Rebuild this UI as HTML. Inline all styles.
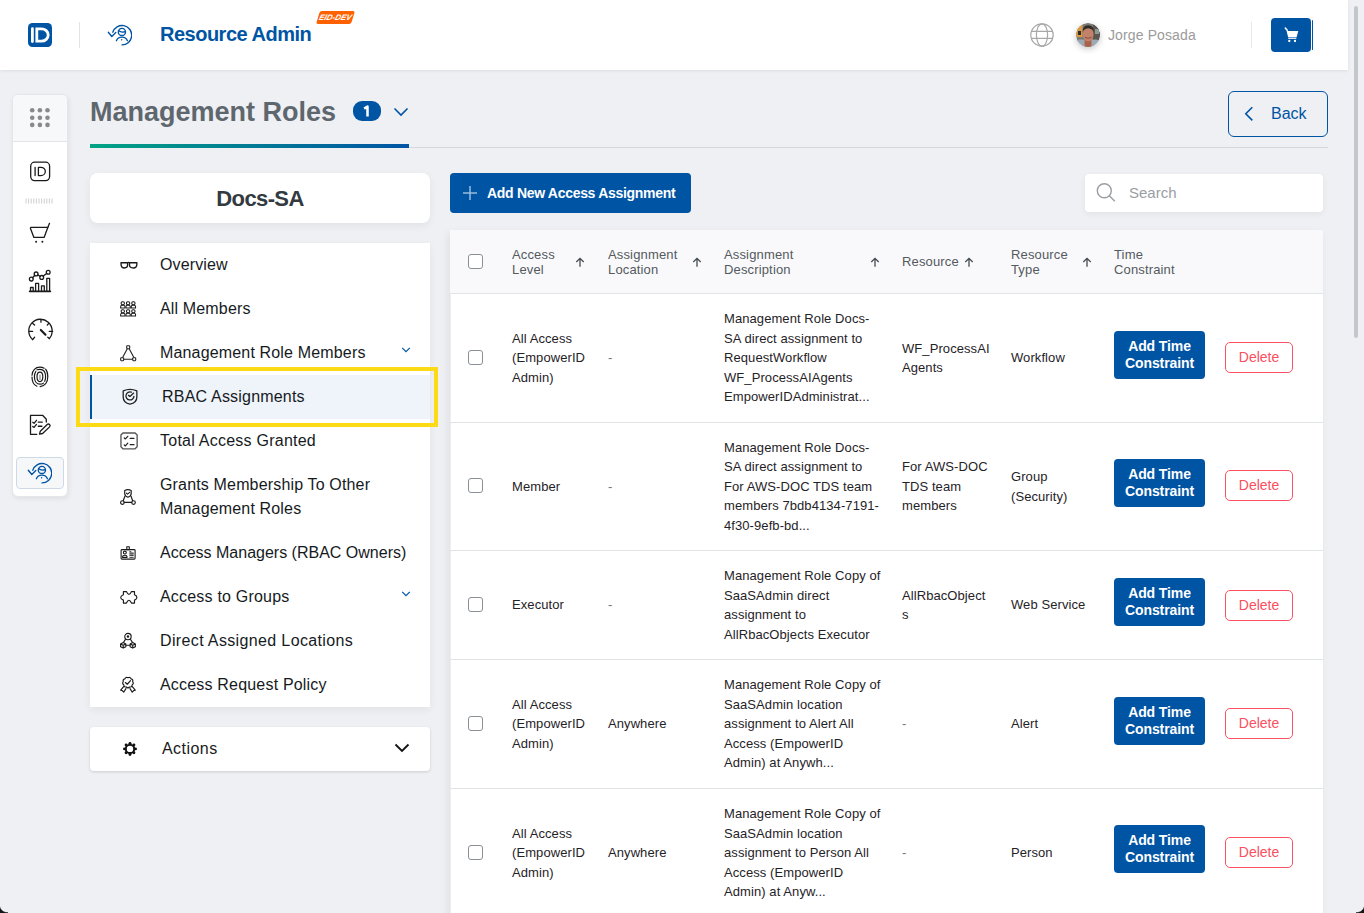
<!DOCTYPE html>
<html><head><meta charset="utf-8">
<style>
*{box-sizing:border-box;margin:0;padding:0}
html,body{width:1364px;height:913px;overflow:hidden}
body{background:#eef0f4;font-family:"Liberation Sans",sans-serif;color:#222;position:relative}
.abs{position:absolute}
#hdr{left:0;top:0;width:1348px;height:70px;background:#fff;box-shadow:0 1px 3px rgba(0,0,0,.08)}
#sb{left:1354px;top:6px;width:4px;height:332px;border-radius:2px;background:#c3c7cb}
.logo{left:28px;top:23px;width:24px;height:24px;background:#0054a4;border-radius:5px}
.vdiv{width:1px;background:#e3e3e3}
.ratitle{left:160px;top:23px;font-size:20px;font-weight:bold;color:#0054a4;letter-spacing:-0.5px}
.eid{left:318px;top:11px;width:35px;height:13px;background:#ff6100;transform:skewX(-17deg);border-radius:2px;color:#fff;font-size:8px;font-style:italic;font-weight:bold;text-align:center;line-height:13px}
.user{left:1108px;top:27px;font-size:14px;color:#9b9b9b;letter-spacing:0.12px}
.cart{left:1271px;top:18px;width:40px;height:34px;background:#0054a4;border-radius:4px}
/* left rail */
#rail{left:12px;top:94px;width:56px;height:403px;background:#fff;border:1px solid #e4e6ea;border-radius:6px;box-shadow:1px 2px 5px rgba(0,0,0,.07);overflow:hidden}
#rail .top{height:47px;background:#f7f8fa;border-bottom:1px solid #e2e4e8}
/* title */
.title{left:90px;top:97px;font-size:27px;font-weight:bold;color:#5f676e}
.badge{left:353px;top:101px;width:28px;height:20px;border-radius:9px;background:#0054a4;color:#fff;font-weight:bold;font-size:13px;text-align:center;line-height:20px}
.gline{left:90px;top:147px;width:1238px;height:1px;background:#d5d8dc}
.gbar{left:90px;top:144px;width:319px;height:4px;background:linear-gradient(90deg,#03a384,#0054a4)}
.backt{left:1271px;top:105px;font-size:16px;color:#0054a4}
.back{left:1228px;top:91px;width:100px;height:46px;border:1.5px solid #0054a4;border-radius:6px;color:#0054a4;font-size:16px}
/* left menu */
.docs{left:90px;top:173px;width:340px;height:50px;background:#fff;border-radius:8px;box-shadow:0 3px 8px rgba(0,0,0,.06);font-size:22px;font-weight:bold;color:#333a40;text-align:center;line-height:52px;letter-spacing:-0.6px}
#menu{left:90px;top:243px;width:340px;height:464px;background:#fff;box-shadow:0 3px 8px rgba(0,0,0,.06)}
.mi{position:absolute;left:0;width:340px;font-size:16px;color:#161a1d;line-height:24px;margin-top:1px}
.mi .t{position:absolute;left:70px}
.mi svg{position:absolute}
.actt{left:162px;top:740px;font-size:16px;color:#1a1a1a;letter-spacing:0.45px}
.actions{left:90px;top:727px;width:340px;height:44px;background:#fff;border-radius:4px;box-shadow:0 1px 3px rgba(0,0,0,.15)}
/* main */
.addt{left:487px;top:185px;font-size:14px;font-weight:bold;color:#fff;letter-spacing:-0.3px}
.addbtn{left:450px;top:173px;width:241px;height:40px;background:#0054a4;border-radius:4px;color:#fff;font-size:15px;font-weight:bold}
.srt{left:1129px;top:184px;font-size:15px;color:#9a9ea3}
.search{left:1085px;top:174px;width:238px;height:38px;background:#fff;border-radius:4px;box-shadow:0 2px 6px rgba(0,0,0,.06)}
#tbl{left:450px;top:230px;width:873px;height:700px;background:#fff;box-shadow:inset 1px 0 0 #eceef1,-2px 3px 8px rgba(0,0,0,.07)}
.thead{position:absolute;left:0;top:0;width:873px;height:64px;background:#f9f9fb;border-bottom:1px solid #e2e3e6}
.hc{position:absolute;display:flex;align-items:center;font-size:13px;line-height:15px;color:#545a60;letter-spacing:0.15px}
.row{position:absolute;left:0;width:873px;border-bottom:1px solid #e2e3e6}
.c{position:absolute;top:0;bottom:0;display:flex;align-items:center;font-size:13px;line-height:19.5px;color:#1f2327;letter-spacing:0.08px}
.cb{position:absolute;width:15px;height:15px;border:1px solid #8a8f95;border-radius:3px;background:#fff}
.atc{position:absolute;left:664px;width:91px;height:48px;background:#0054a4;border-radius:4px;color:#fff;font-size:14px;font-weight:bold;text-align:center;line-height:17px;padding-top:7px;letter-spacing:-0.1px}
.dash{color:#777}
.del{position:absolute;left:775px;width:68px;height:31px;border:1px solid #fb5263;border-radius:5px;color:#f9505f;font-size:14px;text-align:center;line-height:29px}
</style></head>
<body>
<div id="hdr" class="abs"></div>
<div id="sb" class="abs"></div>
<!-- header -->
<svg class="abs" style="left:28px;top:23px" width="24" height="24" viewBox="0 0 24 24"><rect width="24" height="24" rx="4.5" fill="#0054a4"/><rect x="3" y="4.2" width="2.8" height="15.8" rx="1.4" fill="#fff"/><path d="M8.8 5.8H13.5A6.7 6.2 0 0 1 13.5 18.2H8.8Z" fill="none" stroke="#fff" stroke-width="2.8"/></svg>
<div class="abs vdiv" style="left:79px;top:22px;height:26px"></div>
<svg class="abs" style="left:106px;top:22px" width="26" height="26" viewBox="0 0 26 26"><g fill="none" stroke="#0054a4" stroke-width="1.35" stroke-linecap="round" stroke-linejoin="round"><path d="M16 22.9A9.7 9.7 0 1 0 6.77 10.2"/><path d="M2.3 10.3L5.8 14.5L9.8 10.5"/><circle cx="15.9" cy="9.9" r="3.6"/><path d="M12.5 8.6Q15.3 11 19.3 9.6"/><path d="M10.4 18.7C11.5 15.8 13.5 15.1 15.9 15.1C18.3 15.1 20.3 15.8 21.4 18.7"/></g><circle cx="15.6" cy="17.8" r=".75" fill="#0054a4"/></svg>
<div class="abs ratitle">Resource Admin</div>
<div class="abs eid">EID-DEV</div>
<svg class="abs" style="left:1030px;top:23px" width="24" height="24" viewBox="0 0 24 24"><g fill="none" stroke="#a8a8a8" stroke-width="1.2"><circle cx="12" cy="12" r="11.2"/><ellipse cx="12" cy="12" rx="5.6" ry="11.2"/><path d="M1.2 8.3h21.6M1.2 15.4h21.6"/></g></svg>
<svg class="abs" style="left:1076px;top:23px;border-radius:50%;box-shadow:0 2px 6px rgba(0,0,0,.22)" width="24" height="24" viewBox="0 0 24 24"><defs><clipPath id="av"><circle cx="12" cy="12" r="12"/></clipPath></defs><g clip-path="url(#av)"><rect width="24" height="24" fill="#7d7a76"/><rect x="0" y="2" width="6.5" height="12" fill="#d99a48"/><rect x="2" y="8" width="3" height="4" fill="#2a2a2a"/><rect x="17" y="0" width="7" height="17" fill="#5b5750"/><rect x="19" y="6" width="4" height="5" fill="#8e9a90"/><path d="M0 24V17.5Q5 15.5 12 18Q19 15.5 24 17.5V24Z" fill="#9fa9b5"/><path d="M8.5 16H15.5V24H8.5Z" fill="#a8644a"/><ellipse cx="12.2" cy="11.5" rx="5.3" ry="7" fill="#c4816a"/><path d="M6.6 9.5Q6.3 2.2 12.2 2.2Q18 2.2 17.8 9.5Q17 5.6 12.2 5.3Q7.5 5.6 6.6 9.5Z" fill="#2e2a26"/><path d="M9 14.2Q12.2 16.6 15.4 14.2" stroke="#7a4a3a" stroke-width=".9" fill="none"/></g></svg>
<div class="abs user">Jorge Posada</div>
<div class="abs vdiv" style="left:1251px;top:22px;height:26px;background:#e8e8e8"></div>
<div class="abs cart"></div>
<svg class="abs" style="left:1284px;top:27px" width="16" height="16" viewBox="0 0 16 16"><path d="M1.3 1L3.2 3.3" stroke="#fff" stroke-width="1.5" stroke-linecap="round"/><path d="M2.6 4H14.3L12.6 10.3H4.1Z" fill="#fff"/><path d="M4.2 11.3H12.3" stroke="#fff" stroke-width="1.1"/><g fill="#fff"><circle cx="5.3" cy="14" r="1.15"/><circle cx="11" cy="14" r="1.15"/></g></svg>
<div class="abs" style="left:1312px;top:20px;width:1px;height:30px;background:#0054a4;border-radius:1px"></div>

<!-- rail -->
<div id="rail" class="abs"><div class="top"></div></div>
<svg class="abs" style="left:29px;top:106px" width="22" height="22" viewBox="0 0 22 22"><g fill="#8a8a8a"><circle cx="3.2" cy="4.2" r="2.3"/><circle cx="3.2" cy="11.7" r="2.3"/><circle cx="3.2" cy="18.9" r="2.3"/><circle cx="10.9" cy="4.2" r="2.3"/><circle cx="10.9" cy="11.7" r="2.3"/><circle cx="10.9" cy="18.9" r="2.3"/><circle cx="18.5" cy="4.2" r="2.3"/><circle cx="18.5" cy="11.7" r="2.3"/><circle cx="18.5" cy="18.9" r="2.3"/></g></svg>
<svg class="abs" style="left:24px;top:152px" width="34" height="34" viewBox="0 0 34 34"><g fill="none" stroke="#1a1a1a" stroke-width="1.3" stroke-linecap="round" stroke-linejoin="round" stroke-width="1.4"><rect x="6.7" y="10.2" width="18.9" height="18.4" rx="4"/><path d="M11.1 15.3V23.6M14.4 15.3H16.9A4.4 4.15 0 0 1 16.9 23.6H14.4Z"/></g></svg>
<svg class="abs" style="left:25px;top:198px" width="30" height="6" viewBox="0 0 30 6"><g stroke="#c8c8c8" stroke-width="0.9"><path d="M1.0 0.5V5.5"/><path d="M3.6 0.5V5.5"/><path d="M6.2 0.5V5.5"/><path d="M8.8 0.5V5.5"/><path d="M11.4 0.5V5.5"/><path d="M14.0 0.5V5.5"/><path d="M16.6 0.5V5.5"/><path d="M19.2 0.5V5.5"/><path d="M21.8 0.5V5.5"/><path d="M24.400000000000002 0.5V5.5"/><path d="M27.0 0.5V5.5"/></g></svg>
<svg class="abs" style="left:24px;top:216px" width="34" height="34" viewBox="0 0 34 34"><g fill="none" stroke="#1a1a1a" stroke-width="1.3" stroke-linecap="round" stroke-linejoin="round"><path d="M6.8 11.4H23.8L20.1 21.4H9.9L6.4 12.2Z"/><path d="M23.8 11.4L25.5 7.3"/></g><g fill="#1a1a1a"><circle cx="12.1" cy="25.7" r="1"/><circle cx="18.4" cy="25.7" r="1"/></g></svg>
<svg class="abs" style="left:24px;top:264px" width="34" height="34" viewBox="0 0 34 34"><g fill="none" stroke="#1a1a1a" stroke-width="1.3" stroke-linecap="round" stroke-linejoin="round"><path d="M5.6 27.4H26.4" stroke-width="1.6"/><path d="M6.5 27.4V23.5H9.2V27.4M11.6 27.4V19.4H14.6V27.4M17.5 27.4V21.8H20.3V27.4M22.8 27.4V14.3H25.6V27.4"/><circle cx="7.3" cy="15.1" r="1.9"/><circle cx="12.1" cy="9.9" r="1.9"/><circle cx="17.7" cy="13.4" r="1.9"/><circle cx="24.2" cy="8.2" r="1.9"/><path d="M8.6 13.7L10.8 11.3M13.8 10.9L16 12.3M19.3 12.1L22.6 9.4"/></g></svg>
<svg class="abs" style="left:24px;top:312px" width="34" height="34" viewBox="0 0 34 34"><g fill="none" stroke="#1a1a1a" stroke-width="1.3" stroke-linecap="round" stroke-linejoin="round"><path d="M8.6 27.6A11.7 11.7 0 1 1 25.3 26.6"/><path d="M8.6 27.6L10.6 25.3M25.3 26.6L23.8 25.3M16.95 7.6V10.2M5.4 19.4H8.6M28.6 19.4H25.3M8.75 11.4L10.6 13M24.8 11.4L23.3 13"/><path d="M16.8 17.9L21.5 22.7" stroke-width="2.1"/></g></svg>
<svg class="abs" style="left:24px;top:360px" width="34" height="34" viewBox="0 0 34 34"><g fill="none" stroke="#1a1a1a" stroke-width="1.2" stroke-linecap="round"><path d="M8 15.2C8.3 10.5 11.4 7.1 15.9 7.1C17.6 7.1 19 7.6 20.1 8.3"/><path d="M21.6 9.2C23 10.8 23.8 13.2 23.8 16.8C23.8 22.3 20.6 26 16.2 26.6"/><path d="M12.9 26.2C10 25 8 21.5 8 17"/><path d="M13 9.8C14 9.4 15 9.3 16 9.3C19.3 9.3 21.6 12.1 21.6 16.7C21.6 18.5 21.3 20 20.7 21.3"/><path d="M19.5 23.1C18.6 23.8 17.4 24.2 16 24.2C12.7 24.2 10.4 21.2 10.4 16.7C10.4 14.6 10.9 12.9 11.8 11.5"/><ellipse cx="15.9" cy="16.85" rx="2.9" ry="4.75"/><path d="M16 15V19.6" stroke="#888"/></g></svg>
<svg class="abs" style="left:24px;top:408px" width="34" height="34" viewBox="0 0 34 34"><g fill="none" stroke="#1a1a1a" stroke-width="1.3" stroke-linecap="round" stroke-linejoin="round"><path d="M12.8 26.3H6.5V7.45H18.8L22.3 11.2V14.1"/><path d="M8.75 14.3L10.05 15.3L12.5 12.3M8.75 18.4L10.05 19.4L12.5 16.4M14.3 14.15H18.2M14.3 18.25H17.9"/><path d="M15.5 26.2L16.3 23.2L23.2 16.5A1.7 1.7 0 0 1 25.6 18.9L18.6 25.5Z"/></g></svg>
<div class="abs" style="left:16px;top:457px;width:48px;height:32px;border:1px solid #cfd9e6;border-radius:4px;background:#f6f7f9"></div>
<svg class="abs" style="left:26px;top:460px" width="26" height="26" viewBox="0 0 26 26"><g fill="none" stroke="#0054a4" stroke-width="1.35" stroke-linecap="round" stroke-linejoin="round"><path d="M16 22.9A9.7 9.7 0 1 0 6.77 10.2"/><path d="M2.3 10.3L5.8 14.5L9.8 10.5"/><circle cx="15.9" cy="9.9" r="3.6"/><path d="M12.5 8.6Q15.3 11 19.3 9.6"/><path d="M10.4 18.7C11.5 15.8 13.5 15.1 15.9 15.1C18.3 15.1 20.3 15.8 21.4 18.7"/></g><circle cx="15.6" cy="17.8" r=".75" fill="#0054a4"/></svg>

<!-- title -->
<div class="abs title">Management Roles</div>
<div class="abs badge"></div>
<svg class="abs" style="left:360px;top:104px" width="12" height="14" viewBox="0 0 12 14"><path d="M4.2 4.6L7.5 2.5V12.5" fill="none" stroke="#fff" stroke-width="2.5" stroke-linecap="butt" stroke-linejoin="round"/></svg>
<svg class="abs" style="left:393px;top:107px" width="16" height="10" viewBox="0 0 16 10"><path d="M1.5 1.5L8 8L14.5 1.5" fill="none" stroke="#0054a4" stroke-width="1.6"/></svg>
<div class="abs gline"></div>
<div class="abs gbar"></div>
<div class="abs back"></div>
<svg class="abs" style="left:1244px;top:106px" width="10" height="16" viewBox="0 0 10 16"><path d="M8.3 1.2L1.8 7.8L8.3 14.4" fill="none" stroke="#0054a4" stroke-width="1.6"/></svg>
<div class="abs backt">Back</div>

<div class="abs docs">Docs-SA</div>
<div id="menu" class="abs">
<div class="abs" style="left:0;top:132px;width:340px;height:44px;background:#eff3fa;border-left:2.5px solid #0054a4"></div>
<div class="mi" style="top:9px"><span class="t" style="left:70px;letter-spacing:0.13px">Overview</span></div>
<div class="mi" style="top:53px"><span class="t" style="left:70px;letter-spacing:0.15px">All Members</span></div>
<div class="mi" style="top:97px"><span class="t" style="left:70px;letter-spacing:0.16px">Management Role Members</span></div>
<div class="mi" style="top:141px"><span class="t" style="left:72px;letter-spacing:0.2px">RBAC Assignments</span></div>
<div class="mi" style="top:185px"><span class="t" style="left:70px;letter-spacing:0.24px">Total Access Granted</span></div>
<div class="mi" style="top:229px"><span class="t" style="left:70px;letter-spacing:0.16px">Grants Membership To Other<br>Management Roles</span></div>
<div class="mi" style="top:297px"><span class="t" style="left:70px;letter-spacing:0px">Access Managers (RBAC Owners)</span></div>
<div class="mi" style="top:341px"><span class="t" style="left:70px;letter-spacing:0.2px">Access to Groups</span></div>
<div class="mi" style="top:385px"><span class="t" style="left:70px;letter-spacing:0.36px">Direct Assigned Locations</span></div>
<div class="mi" style="top:429px"><span class="t" style="left:70px;letter-spacing:0.19px">Access Request Policy</span></div>
<svg class="abs" style="left:29px;top:17px" width="20" height="10" viewBox="0 0 20 10"><g fill="none" stroke="#1a1a1a" stroke-width="1.35" stroke-linejoin="round"><path d="M2 2.7H8.6V5.3Q8.4 8 5.4 8Q2.4 8 2.1 5Z"/><path d="M10.5 2.7H17.9L17.8 5Q17.5 8 14.4 8Q10.7 8 10.5 5.3Z"/><path d="M8.6 2.7Q9.5 2 10.5 2.7"/></g></svg><svg class="abs" style="left:30px;top:57px" width="17" height="18" viewBox="0 0 17 18"><g fill="none" stroke="#1a1a1a" stroke-width="1.05" stroke-linejoin="round"><g transform="translate(0.1,1.1)"><rect x="1.1" y="0.6" width="3.2" height="3.1" rx="1.2"/><path d="M0.55 6.8V5.4Q0.55 4.1 2 4.1H3.4Q4.85 4.1 4.85 5.4V6.8Z"/></g><g transform="translate(5.4,1.1)"><rect x="1.1" y="0.6" width="3.2" height="3.1" rx="1.2"/><path d="M0.55 6.8V5.4Q0.55 4.1 2 4.1H3.4Q4.85 4.1 4.85 5.4V6.8Z"/></g><g transform="translate(10.7,1.1)"><rect x="1.1" y="0.6" width="3.2" height="3.1" rx="1.2"/><path d="M0.55 6.8V5.4Q0.55 4.1 2 4.1H3.4Q4.85 4.1 4.85 5.4V6.8Z"/></g><g transform="translate(0.1,9.1)"><rect x="1.1" y="0.6" width="3.2" height="3.1" rx="1.2"/><path d="M0.55 6.8V5.4Q0.55 4.1 2 4.1H3.4Q4.85 4.1 4.85 5.4V6.8Z"/></g><g transform="translate(5.4,9.1)"><rect x="1.1" y="0.6" width="3.2" height="3.1" rx="1.2"/><path d="M0.55 6.8V5.4Q0.55 4.1 2 4.1H3.4Q4.85 4.1 4.85 5.4V6.8Z"/></g><g transform="translate(10.7,9.1)"><rect x="1.1" y="0.6" width="3.2" height="3.1" rx="1.2"/><path d="M0.55 6.8V5.4Q0.55 4.1 2 4.1H3.4Q4.85 4.1 4.85 5.4V6.8Z"/></g></g></svg><svg class="abs" style="left:30px;top:102px" width="17" height="17" viewBox="0 0 17 17"><g fill="none" stroke="#222" stroke-width="1.1"><rect x="6.7" y="0.7" width="3" height="3" rx=".6"/><rect x="0.7" y="12.7" width="3" height="3" rx=".6"/><rect x="12.7" y="12.7" width="3" height="3" rx=".6"/><path d="M7.3 3.8L2.6 12.6M9.2 3.8L13.9 12.6M3.8 14.2H12.6"/></g></svg><svg class="abs" style="left:32px;top:144px" width="17" height="19" viewBox="0 0 17 19"><g fill="none" stroke="#222" stroke-width="1.3" stroke-linecap="round" stroke-linejoin="round"><path d="M1.2 3.8Q8 0.8 14.85 3.8V10C14.85 14 11.5 16.5 8 17.15C4.5 16.5 1.2 14 1.2 10Z"/><path d="M11.94 9.32A4 4 0 1 1 9.33 5.21"/><path d="M6.5 8.4L7.96 9.4L11.66 6.1"/></g></svg><svg class="abs" style="left:30px;top:188px" width="18" height="19" viewBox="0 0 18 19"><g fill="none" stroke="#222" stroke-width="1.3" stroke-linecap="round" stroke-linejoin="round"><path d="M2.9 2H15.1L17.15 4V15.8L15.1 17.8H2.9L0.95 15.8V4Z" stroke="#555" stroke-width="1.35"/><path d="M4.3 7L5.4 7.9L7.8 5.3M10.2 7.4H13.9M4.3 14L5.4 14.9L7.8 12.2M10.2 13.7H14" stroke-width="1.25"/></g></svg><svg class="abs" style="left:30px;top:245px" width="17" height="17" viewBox="0 0 17 17"><g fill="none" stroke="#1a1a1a" stroke-width="1.15" stroke-linejoin="round" stroke-linecap="round"><path d="M4.7 2.5Q7.95 0.9 11.2 2.5V5.5C11.2 7.6 9.8 8.6 7.95 9.2C6.1 8.6 4.7 7.6 4.7 5.5Z"/><path d="M6.4 5.1L7.5 6.1L9.7 4.4"/><circle cx="2.4" cy="14.5" r="1.8"/><circle cx="13.5" cy="14.5" r="1.8"/><path d="M4.9 8.3L3.2 12.8M11 8.3L12.7 12.8M4.2 14.4H11.7"/></g></svg><svg class="abs" style="left:30px;top:302px" width="17" height="16" viewBox="0 0 17 16"><g fill="none" stroke="#1a1a1a" stroke-width="1.1" stroke-linejoin="round"><rect x="1.1" y="4.65" width="14" height="9.45" rx="0.9"/><rect x="6.8" y="1.8" width="2.5" height="2.85"/><circle cx="4.83" cy="7.6" r="1.45"/><path d="M2.6 12.4V11.6Q2.6 10.3 4.8 10.3Q7 10.3 7 11.6V12.4Z"/><path d="M9.4 6.7H11.3M9.4 8H13.7M9.4 9H13.7M9.4 10.4H13.7M9.4 12.3H13.7" stroke-width="0.9"/></g></svg><svg class="abs" style="left:30px;top:347px" width="19" height="15" viewBox="0 0 19 15"><path d="M3.4 1.55H6.4C7.3 3.5 8 4.4 8.96 4.4S10.6 3.5 11.5 1.55H14.5V4.7C16 5.3 16.9 6.3 16.9 7.4S16 9.5 14.5 10.1V13.1H11.5C10.6 11.2 9.9 10.2 8.96 10.2S7.3 11.2 6.4 13.1H3.4V10.1C1.9 9.5 0.7 8.5 0.7 7.4S1.9 5.3 3.4 4.7Z" fill="none" stroke="#1a1a1a" stroke-width="1.15" stroke-linejoin="round"/></svg><svg class="abs" style="left:30px;top:389px" width="17" height="18" viewBox="0 0 17 18"><g fill="none" stroke="#1a1a1a" stroke-width="1.15" stroke-linejoin="round"><circle cx="7.97" cy="4.55" r="3.2"/><path d="M3.2 10.4L5.800000000000001 11.9V14.7L3.2 16.1L0.6000000000000001 14.7V11.9Z"/><path d="M0.6000000000000001 11.9L3.2 13.3L5.800000000000001 11.9M3.2 13.3V16.1"/><path d="M12.74 10.4L15.34 11.9V14.7L12.74 16.1L10.14 14.7V11.9Z"/><path d="M10.14 11.9L12.74 13.3L15.34 11.9M12.74 13.3V16.1"/><path d="M5.6 7.1L3.6 10.2M10.34 7.1L12.34 10.2M5.8 13.2H10.14"/></g><circle cx="7.97" cy="4.55" r="1.2" fill="#1a1a1a"/></svg><svg class="abs" style="left:30px;top:433px" width="17" height="18" viewBox="0 0 17 18"><g fill="none" stroke="#1a1a1a" stroke-width="1.15" stroke-linejoin="round" stroke-linecap="round"><path d="M7.97 1.79Q10.12 0.62 11.02 2.90Q13.43 3.39 12.65 5.72Q14.17 7.63 12.08 8.91Q12.02 11.37 9.59 11.00Q7.97 12.84 6.35 11.00Q3.92 11.37 3.86 8.92Q1.77 7.63 3.29 5.72Q2.51 3.39 4.92 2.90Q5.82 0.62 7.97 1.79Z"/><path d="M5.4 6.54L7.25 8.25L10.5 4.7"/><path d="M3.6 10.6L0.7 14.2L2.3 14.6L3.7 16.2L5.9 12.6M12.34 10.6L15.24 14.2L13.64 14.6L12.24 16.2L10.04 12.6"/></g></svg><svg class="abs" style="left:310px;top:103px" width="12" height="8" viewBox="0 0 12 8"><path d="M2.2 1.8L6 5.6L9.8 1.8" fill="none" stroke="#0054a4" stroke-width="1.2"/></svg>
<svg class="abs" style="left:310px;top:347px" width="12" height="8" viewBox="0 0 12 8"><path d="M2.2 1.8L6 5.6L9.8 1.8" fill="none" stroke="#0054a4" stroke-width="1.2"/></svg>
</div>
<div class="abs" style="left:76px;top:367px;width:362px;height:60px;border:4px solid #fcdb16"></div>
<div class="abs actions"></div>
<svg class="abs" style="left:121px;top:740px" width="18" height="18" viewBox="0 0 18 18"><circle cx="9" cy="8.9" r="4.2" fill="none" stroke="#111" stroke-width="2"/><g fill="#111"><circle cx="14.55" cy="8.90" r="1.45"/><circle cx="12.92" cy="12.82" r="1.45"/><circle cx="9.00" cy="14.45" r="1.45"/><circle cx="5.08" cy="12.82" r="1.45"/><circle cx="3.45" cy="8.90" r="1.45"/><circle cx="5.08" cy="4.98" r="1.45"/><circle cx="9.00" cy="3.35" r="1.45"/><circle cx="12.92" cy="4.98" r="1.45"/></g></svg>
<div class="abs actt">Actions</div>
<svg class="abs" style="left:394px;top:743px" width="16" height="10" viewBox="0 0 16 10"><path d="M1.5 1.5L8 8L14.5 1.5" fill="none" stroke="#111" stroke-width="1.8"/></svg>

<div class="abs addbtn"></div>
<svg class="abs" style="left:462px;top:185px" width="16" height="16" viewBox="0 0 16 16"><path d="M8 1V15M1 8H15" stroke="#fff" stroke-opacity=".6" stroke-width="1.5"/></svg>
<div class="abs addt">Add New Access Assignment</div>
<div class="abs search"></div>
<svg class="abs" style="left:1096px;top:182px" width="20" height="21" viewBox="0 0 20 21"><g fill="none" stroke="#9a9ea3" stroke-width="1.4"><circle cx="8.3" cy="8.8" r="7"/><path d="M13.3 13.8L18.8 19.3"/></g></svg>
<div class="abs srt">Search</div>
<div id="tbl" class="abs">
<div class="thead">
<div class="cb" style="left:18px;top:24px"></div>
<div class="hc" style="left:62px;top:0;height:63px">Access<br>Level</div>
<div class="hc" style="left:158px;top:0;height:63px">Assignment<br>Location</div>
<div class="hc" style="left:274px;top:0;height:63px">Assignment<br>Description</div>
<div class="hc" style="left:452px;top:0;height:63px">Resource</div>
<div class="hc" style="left:561px;top:0;height:63px">Resource<br>Type</div>
<div class="hc" style="left:664px;top:0;height:63px">Time<br>Constraint</div>
<svg class="abs" style="left:125px;top:25px" width="10" height="13" viewBox="0 0 10 13"><path d="M5 11.8V3.3M1.3 7L5 3.3L8.7 7" fill="none" stroke="#454b52" stroke-width="1.3"/></svg>
<svg class="abs" style="left:242px;top:25px" width="10" height="13" viewBox="0 0 10 13"><path d="M5 11.8V3.3M1.3 7L5 3.3L8.7 7" fill="none" stroke="#454b52" stroke-width="1.3"/></svg>
<svg class="abs" style="left:420px;top:25px" width="10" height="13" viewBox="0 0 10 13"><path d="M5 11.8V3.3M1.3 7L5 3.3L8.7 7" fill="none" stroke="#454b52" stroke-width="1.3"/></svg>
<svg class="abs" style="left:514px;top:25px" width="10" height="13" viewBox="0 0 10 13"><path d="M5 11.8V3.3M1.3 7L5 3.3L8.7 7" fill="none" stroke="#454b52" stroke-width="1.3"/></svg>
<svg class="abs" style="left:632px;top:25px" width="10" height="13" viewBox="0 0 10 13"><path d="M5 11.8V3.3M1.3 7L5 3.3L8.7 7" fill="none" stroke="#454b52" stroke-width="1.3"/></svg>
</div>
<div class="row" style="top:64px;height:129px">
<div class="cb" style="left:18px;top:56px"></div>
<div class="c" style="left:62px">All Access<br>(EmpowerID<br>Admin)</div>
<div class="c dash" style="left:158px">-</div>
<div class="c" style="left:274px">Management Role Docs-<br>SA direct assignment to<br>RequestWorkflow<br>WF_ProcessAIAgents<br>EmpowerIDAdministrat...</div>
<div class="c" style="left:452px">WF_ProcessAI<br>Agents</div>
<div class="c" style="left:561px">Workflow</div>
<div class="atc" style="top:37px">Add Time<br>Constraint</div>
<div class="del" style="top:48px">Delete</div>
</div>
<div class="row" style="top:193px;height:128px">
<div class="cb" style="left:18px;top:55px"></div>
<div class="c" style="left:62px">Member</div>
<div class="c dash" style="left:158px">-</div>
<div class="c" style="left:274px">Management Role Docs-<br>SA direct assignment to<br>For AWS-DOC TDS team<br>members 7bdb4134-7191-<br>4f30-9efb-bd...</div>
<div class="c" style="left:452px">For AWS-DOC<br>TDS team<br>members</div>
<div class="c" style="left:561px">Group<br>(Security)</div>
<div class="atc" style="top:36px">Add Time<br>Constraint</div>
<div class="del" style="top:47px">Delete</div>
</div>
<div class="row" style="top:321px;height:109px">
<div class="cb" style="left:18px;top:46px"></div>
<div class="c" style="left:62px">Executor</div>
<div class="c dash" style="left:158px">-</div>
<div class="c" style="left:274px">Management Role Copy of<br>SaaSAdmin direct<br>assignment to<br>AllRbacObjects Executor</div>
<div class="c" style="left:452px">AllRbacObject<br>s</div>
<div class="c" style="left:561px">Web Service</div>
<div class="atc" style="top:27px">Add Time<br>Constraint</div>
<div class="del" style="top:39px">Delete</div>
</div>
<div class="row" style="top:430px;height:129px">
<div class="cb" style="left:18px;top:56px"></div>
<div class="c" style="left:62px">All Access<br>(EmpowerID<br>Admin)</div>
<div class="c" style="left:158px">Anywhere</div>
<div class="c" style="left:274px">Management Role Copy of<br>SaaSAdmin location<br>assignment to Alert All<br>Access (EmpowerID<br>Admin) at Anywh...</div>
<div class="c dash" style="left:452px">-</div>
<div class="c" style="left:561px">Alert</div>
<div class="atc" style="top:37px">Add Time<br>Constraint</div>
<div class="del" style="top:48px">Delete</div>
</div>
<div class="row" style="top:559px;height:129px">
<div class="cb" style="left:18px;top:56px"></div>
<div class="c" style="left:62px">All Access<br>(EmpowerID<br>Admin)</div>
<div class="c" style="left:158px">Anywhere</div>
<div class="c" style="left:274px">Management Role Copy of<br>SaaSAdmin location<br>assignment to Person All<br>Access (EmpowerID<br>Admin) at Anyw...</div>
<div class="c dash" style="left:452px">-</div>
<div class="c" style="left:561px">Person</div>
<div class="atc" style="top:36px">Add Time<br>Constraint</div>
<div class="del" style="top:48px">Delete</div>
</div>
</div>
<div class="abs" style="left:0;top:905px;width:8px;height:8px;background:radial-gradient(circle at 7px 0px,transparent 6.6px,#161616 7.8px)"></div>
<div class="abs" style="left:1356px;top:905px;width:8px;height:8px;background:radial-gradient(circle at 1px 0px,transparent 6.6px,#161616 7.8px)"></div>
</body></html>
